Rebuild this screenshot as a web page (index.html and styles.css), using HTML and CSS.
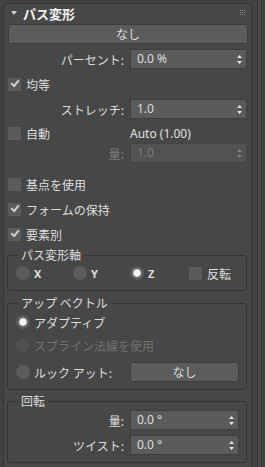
FILE: index.html
```html
<!DOCTYPE html>
<html>
<head>
  <meta charset="UTF-8">
  <title>パス変形</title>
  <link rel="stylesheet" href="styles.css">
</head>
<body>
  <div class="panel">
    <div class="head">
      <span class="tri"></span>
      <span class="title">パス変形</span>
      <svg class="grip" width="6" height="6" viewBox="0 0 6 6">
        <rect x="0" y="0" width="1" height="1"/><rect x="2" y="0" width="1" height="1"/><rect x="4" y="0" width="1" height="1"/>
        <rect x="0" y="2" width="1" height="1"/><rect x="2" y="2" width="1" height="1"/><rect x="4" y="2" width="1" height="1"/>
        <rect x="0" y="4" width="1" height="1"/><rect x="2" y="4" width="1" height="1"/><rect x="4" y="4" width="1" height="1"/>
      </svg>
    </div>
    <div class="content">
      <div class="btn">なし</div>

      <div class="field mt5">
        <span class="lbl">パーセント:</span>
        <div class="spin"><span class="num">0.0 %</span><svg class="arr" width="5" height="9" viewBox="0 0 5 9"><path d="M2.5 0 L5 3 L0 3 Z M0 6 L5 6 L2.5 9 Z"/></svg></div>
      </div>

      <div class="check on mt5"><span class="box"></span>均等</div>

      <div class="field mt5">
        <span class="lbl">ストレッチ:</span>
        <div class="spin"><span class="num">1.0</span><svg class="arr" width="5" height="9" viewBox="0 0 5 9"><path d="M2.5 0 L5 3 L0 3 Z M0 6 L5 6 L2.5 9 Z"/></svg></div>
      </div>

      <div class="field auto mt5">
        <div class="check"><span class="box"></span>自動</div>
        <span class="autoval">Auto (1.00)</span>
      </div>

      <div class="field off mt1">
        <span class="lbl">量:</span>
        <div class="spin"><span class="num">1.0</span><svg class="arr" width="5" height="9" viewBox="0 0 5 9"><path d="M2.5 0 L5 3 L0 3 Z M0 6 L5 6 L2.5 9 Z"/></svg></div>
      </div>

      <div class="check mt11"><span class="box"></span>基点を使用</div>
      <div class="check on mt5"><span class="box"></span>フォームの保持</div>
      <div class="check on mt5"><span class="box"></span>要素別</div>

      <fieldset class="group g1">
        <legend>パス変形軸</legend>
        <div class="axes">
          <div class="radio"><span class="dot"></span><b>X</b></div>
          <div class="radio"><span class="dot"></span><b>Y</b></div>
          <div class="radio sel"><span class="dot"></span><b>Z</b></div>
          <div class="check"><span class="box"></span>反転</div>
        </div>
      </fieldset>

      <fieldset class="group g2">
        <legend>アップ ベクトル</legend>
        <div class="radio sel r1"><span class="dot"></span>アダプティブ</div>
        <div class="radio off r2"><span class="dot"></span>スプライン法線を使用</div>
        <div class="look r3">
          <div class="radio"><span class="dot"></span>ルック アット:</div>
          <div class="btn small">なし</div>
        </div>
      </fieldset>

      <fieldset class="group g3">
        <legend>回転</legend>
        <div class="field mt2">
          <span class="lbl">量:</span>
          <div class="spin"><span class="num">0.0 °</span><svg class="arr" width="5" height="9" viewBox="0 0 5 9"><path d="M2.5 0 L5 3 L0 3 Z M0 6 L5 6 L2.5 9 Z"/></svg></div>
        </div>
        <div class="field mt5">
          <span class="lbl">ツイスト:</span>
          <div class="spin"><span class="num">0.0 °</span><svg class="arr" width="5" height="9" viewBox="0 0 5 9"><path d="M2.5 0 L5 3 L0 3 Z M0 6 L5 6 L2.5 9 Z"/></svg></div>
        </div>
      </fieldset>
    </div>
  </div>
  <div class="side"><div class="track"></div></div>
</body>
</html>
```

FILE: styles.css
```css
body {
  margin: 0;
  background: #424242;
  font-family: "Noto Sans", "Noto Sans CJK JP", sans-serif;
  font-size: 12px;
  color: #dedede;
  display: flex;
  height: 467px;
  overflow: hidden;
}
.panel {
  margin: 3px 0 0 3px;
  width: 247px;
  height: 480px;
  background: #474747;
  border: 1px solid #363636;
  border-radius: 4px;
}
.head {
  display: flex;
  align-items: center;
  height: 18px;
  padding: 0 5px 2px 7px;
}
.tri {
  width: 0;
  height: 0;
  border-left: 3px solid transparent;
  border-right: 3px solid transparent;
  border-top: 4px solid #cfcfcf;
  margin-right: 6px;
}
.title {
  font-family: "Noto Sans CJK JP", sans-serif;
  font-weight: bold;
  font-size: 13px;
  color: #f2f2f2;
  flex: 1;
}
.grip {
  fill: #8c8c8c;
}
.content {
  padding: 0 4px;
}
.btn {
  width: 240px;
  height: 20px;
  box-sizing: border-box;
  background: #5c5c5c;
  border: 1px solid #3d3d3d;
  border-radius: 3px;
  color: #dedede;
  font-family: "Noto Sans CJK JP", sans-serif;
  text-align: center;
  line-height: 18px;
}
.field {
  display: flex;
  align-items: center;
  height: 20px;
  gap: 6px;
}
.lbl {
  flex: 1;
  text-align: right;
  font-family: "Noto Sans CJK JP", sans-serif;
}
.spin {
  width: 117px;
  height: 20px;
  box-sizing: border-box;
  background: #5b5b5b;
  border: 1px solid #3e3e3e;
  display: flex;
  align-items: center;
  padding: 0 4px 0 6px;
}
.num {
  flex: 1;
  line-height: 14px;
}
.arr {
  fill: #e6e6e6;
}
.off .lbl, .off .num {
  color: #7d7d7d;
}
.off .spin {
  background: #525252;
  border-color: #444444;
}
.off .arr {
  fill: #7d7d7d;
}
.check {
  display: flex;
  align-items: center;
  height: 20px;
  gap: 5px;
  font-family: "Noto Sans CJK JP", sans-serif;
}
.box {
  width: 13px;
  height: 13px;
  background: #5b5b5b;
  position: relative;
}
.check.on .box::after {
  content: "";
  position: absolute;
  left: 3px;
  top: 2px;
  width: 6px;
  height: 3px;
  border-left: 2px solid #d2d2d2;
  border-bottom: 2px solid #d2d2d2;
  transform: rotate(-50deg);
}
.auto {
  gap: 0;
  height: 18px;
}
.auto .check {
  width: 122px;
  height: 18px;
}
.autoval {
  color: #e0e0e0;
}
.mt1 { margin-top: 1px; }
.mt2 { margin-top: 2px; }
.mt5 { margin-top: 5px; }
.mt11 { margin-top: 11px; }
.group {
  margin: 4px 0 0 -1px;
  padding: 0 7px 7px 8px;
  border: 1px solid #353535;
  border-radius: 3px;
  min-width: 0;
}
.group legend {
  padding: 0 3px;
  margin-left: 2px;
  line-height: 14px;
  font-family: "Noto Sans CJK JP", sans-serif;
}
.group .spin {
  width: 109px;
}
.g1 .axes {
  display: grid;
  grid-template-columns: 57px 57px 59px auto;
  margin-top: 1px;
}
.g2 {
  margin-top: 5px;
}
.radio {
  display: flex;
  align-items: center;
  height: 20px;
  gap: 4px;
  font-family: "Noto Sans CJK JP", sans-serif;
}
.radio b {
  font-family: "Noto Sans", sans-serif;
  font-weight: bold;
  font-size: 11px;
}
.dot {
  width: 14px;
  height: 14px;
  border-radius: 50%;
  background: #5b5b5b;
}
.radio.sel .dot {
  background: radial-gradient(circle, #f4f4f4 0 3px, #9a9a9a 4px, #5b5b5b 5px);
}
.radio.off {
  color: #707070;
}
.radio.off .dot {
  background: #4f4f4f;
}
.r1 { margin-top: 2px; }
.r2 { margin-top: 3px; }
.r3 { margin-top: 7px; }
.look {
  display: flex;
  align-items: center;
  justify-content: space-between;
  height: 20px;
}
.btn.small {
  width: 109px;
  flex: none;
}
.side {
  margin-left: 3px;
  padding-left: 2px;
  width: 8px;
}
.track {
  width: 3px;
  height: 100%;
  background: #4a4a4a;
  border-left: 1px solid #333333;
  border-right: 1px solid #333333;
}
```
